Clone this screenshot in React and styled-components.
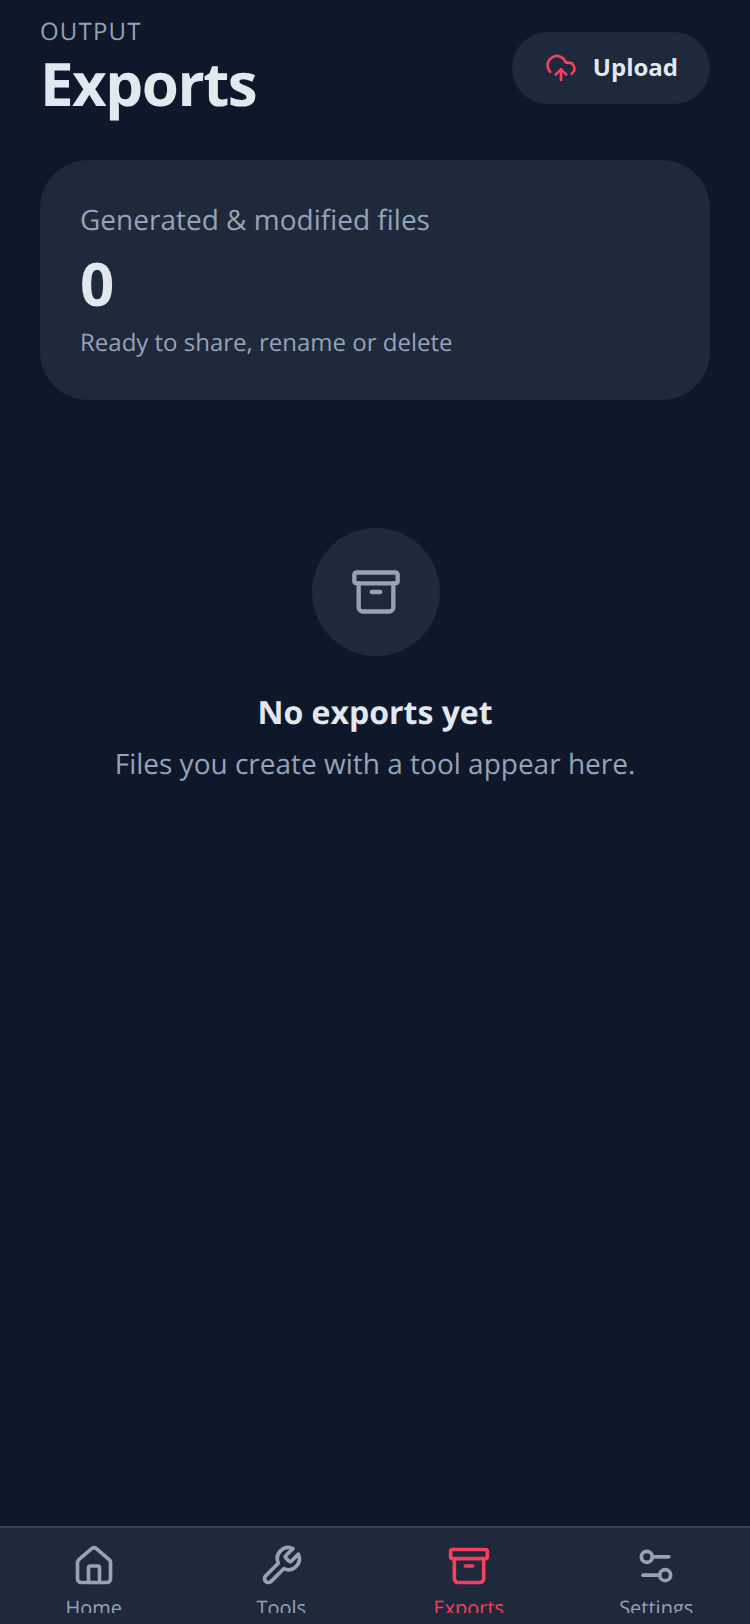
import React from "react";
import styled, { createGlobalStyle } from "styled-components";
import { Archive, CloudUpload, House, Settings2 } from "lucide-react";

const GlobalStyle = createGlobalStyle`
  html, body {
    margin: 0;
    padding: 0;
    background: #0f172a;
    overflow: hidden;
    text-rendering: geometricPrecision;
  }
  * {
    box-sizing: border-box;
  }
`;

const Page = styled.div`
  width: 750px;
  height: 1624px;
  display: flex;
  flex-direction: column;
  background: #0f172a;
  color: #e2e8f0;
  font-family: "Open Sans", sans-serif;
`;

const Main = styled.main`
  flex: 1;
  padding: 17px 40px 0;
`;

const Header = styled.header`
  display: flex;
  justify-content: space-between;
  align-items: center;
`;

const Eyebrow = styled.div`
  font-size: 24px;
  line-height: 30px;
  letter-spacing: 1.2px;
  color: #94a3b8;
`;

const Title = styled.h1`
  margin: 0;
  font-size: 60px;
  line-height: 72px;
  font-weight: 700;
  letter-spacing: -1.5px;
`;

const UploadButton = styled.button`
  display: flex;
  align-items: center;
  gap: 16px;
  height: 72px;
  padding: 0 32px 0 33px;
  border: 0;
  border-radius: 36px;
  background: #1e293b;
  color: #e2e8f0;
  font-family: inherit;
  font-size: 24px;
  font-weight: 700;
  svg {
    color: #f43f5e;
  }
`;

const UploadLabel = styled.span`
  padding-bottom: 4px;
`;

const StatCard = styled.section`
  margin-top: 41px;
  height: 240px;
  padding: 42px 40px 0;
  border-radius: 48px;
  background: #1e293b;
`;

const StatLabel = styled.div`
  font-size: 28px;
  line-height: 36px;
  color: #94a3b8;
`;

const StatValue = styled.div`
  margin-top: 9px;
  font-size: 60px;
  line-height: 72px;
  font-weight: 700;
`;

const StatHint = styled.div`
  margin-top: 8px;
  font-size: 24px;
  line-height: 32px;
  color: #94a3b8;
`;

const EmptyState = styled.section`
  margin-top: 128px;
  display: flex;
  flex-direction: column;
  align-items: center;
`;

const EmptyIcon = styled.div`
  width: 128px;
  height: 128px;
  margin-left: 2px;
  display: flex;
  align-items: center;
  justify-content: center;
  border-radius: 50%;
  background: #1e293b;
  color: #94a3b8;
`;

const EmptyTitle = styled.h2`
  margin: 33px 0 0;
  font-size: 32px;
  line-height: 48px;
  font-weight: 700;
`;

const EmptyText = styled.p`
  margin: 7px 0 0;
  font-size: 28px;
  line-height: 40px;
  color: #94a3b8;
`;

const TabBar = styled.nav`
  height: 98px;
  display: grid;
  grid-template-columns: repeat(4, 1fr);
  padding: 16px 0 0;
  border-top: 2px solid #334155;
  background: #1e293b;
`;

const TabItem = styled.a`
  height: 69px;
  overflow: hidden;
  display: flex;
  flex-direction: column;
  align-items: center;
  gap: 6px;
  color: ${(props) => (props.$active ? "#f43f5e" : "#94a3b8")};
  font-size: 20px;
  line-height: 28px;
  svg {
    flex: none;
  }
`;

function WrenchIcon({ size }) {
  return (
    <svg
      width={size}
      height={size}
      viewBox="0 0 24 24"
      fill="none"
      stroke="currentColor"
      strokeWidth="2"
      strokeLinecap="round"
      strokeLinejoin="round"
    >
      <path d="M14.7 6.3a1 1 0 0 0 0 1.4l1.6 1.6a1 1 0 0 0 1.4 0l3.77-3.77a6 6 0 0 1-7.94 7.94l-6.91 6.91a2.12 2.12 0 0 1-3-3l6.91-6.91a6 6 0 0 1 7.94-7.94l-3.76 3.76z" />
    </svg>
  );
}

const tabs = [
  { label: "Home", Icon: House },
  { label: "Tools", Icon: WrenchIcon },
  { label: "Exports", Icon: Archive, active: true },
  { label: "Settings", Icon: Settings2 },
];

export default function App() {
  return (
    <Page>
      <GlobalStyle />
      <Main>
        <Header>
          <div>
            <Eyebrow>OUTPUT</Eyebrow>
            <Title>Exports</Title>
          </div>
          <UploadButton type="button">
            <CloudUpload size={32} />
            <UploadLabel>Upload</UploadLabel>
          </UploadButton>
        </Header>
        <StatCard>
          <StatLabel>Generated &amp; modified files</StatLabel>
          <StatValue>0</StatValue>
          <StatHint>Ready to share, rename or delete</StatHint>
        </StatCard>
        <EmptyState>
          <EmptyIcon>
            <Archive size={52} />
          </EmptyIcon>
          <EmptyTitle>No exports yet</EmptyTitle>
          <EmptyText>Files you create with a tool appear here.</EmptyText>
        </EmptyState>
      </Main>
      <TabBar>
        {tabs.map(({ label, Icon, active }) => (
          <TabItem key={label} $active={active}>
            <Icon size={44} />
            {label}
          </TabItem>
        ))}
      </TabBar>
    </Page>
  );
}
